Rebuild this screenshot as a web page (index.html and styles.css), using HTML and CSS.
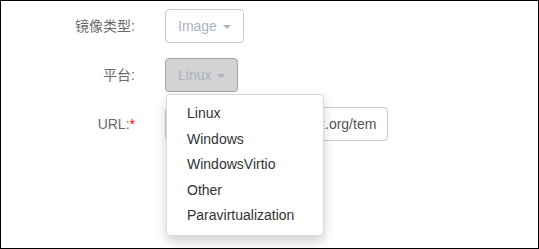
FILE: index.html
```html
<!DOCTYPE html>
<html lang="zh">
<head>
    <meta charset="UTF-8">
    <title>镜像</title>
    <link rel="stylesheet" href="styles.css">
</head>
<body>
    <form class="form-horizontal">
        <div class="form-group">
            <label class="control-label">镜像类型:</label>
            <div class="controls">
                <button type="button" class="btn btn-light">Image <span class="caret"></span></button>
            </div>
        </div>

        <div class="form-group">
            <label class="control-label">平台:</label>
            <div class="controls dropdown">
                <button type="button" class="btn btn-active">Linux <span class="caret"></span></button>
                <ul class="dropdown-menu">
                    <li><a href="#">Linux</a></li>
                    <li><a href="#">Windows</a></li>
                    <li><a href="#">WindowsVirtio</a></li>
                    <li><a href="#">Other</a></li>
                    <li><a href="#">Paravirtualization</a></li>
                </ul>
            </div>
        </div>

        <div class="form-group">
            <label class="control-label">URL:<span class="required">*</span></label>
            <div class="controls">
                <input type="text" class="form-control" value="http://download.openvz.org/tem">
            </div>
        </div>
    </form>
</body>
</html>
```

FILE: styles.css
```css
html, body {
    margin: 0;
    padding: 0;
}
body {
    width: 539px;
    height: 249px;
    box-sizing: border-box;
    border: 1px solid #000;
    background: #fff;
    font-family: "Liberation Sans", Arial, "Noto Sans CJK SC", sans-serif;
    font-size: 14px;
    line-height: 20px;
    color: #333;
    overflow: hidden;
}
.form-horizontal {
    padding-top: 8px;
}
.form-group {
    display: flex;
    margin-bottom: 15px;
}
.control-label {
    width: 134px;
    padding-right: 15px;
    padding-top: 7px;
    text-align: right;
    color: #6a6a6a;
}
.required {
    color: #f00;
}
.controls {
    padding-left: 15px;
    position: relative;
}
.btn {
    height: 34px;
    padding: 6px 12px;
    border: 1px solid #c4cad3;
    border-radius: 4px;
    background: #fff;
    font-family: inherit;
    font-size: 14px;
    line-height: 20px;
    color: #abb2bc;
    box-sizing: border-box;
}
.btn-active {
    background: #d3d3d3;
    border-color: #a4a4a4;
    color: #abb1ba;
}
.caret {
    display: inline-block;
    width: 0;
    height: 0;
    margin-left: 2px;
    vertical-align: middle;
    border-top: 4px solid;
    border-left: 4px solid transparent;
    border-right: 4px solid transparent;
}
.form-control {
    width: 223px;
    height: 34px;
    padding: 6px 9px 6px 15px;
    border: 1px solid #c4cad3;
    border-radius: 4px;
    font-family: inherit;
    font-size: 14px;
    color: #555;
    box-sizing: border-box;
}
.dropdown-menu {
    position: absolute;
    top: 36px;
    left: 16px;
    z-index: 10;
    width: 158px;
    box-sizing: border-box;
    margin: 0;
    padding: 6px 0;
    list-style: none;
    background: #fff;
    border: 1px solid rgba(0,0,0,0.15);
    border-radius: 4px;
    box-shadow: 0 6px 12px rgba(0,0,0,0.175);
}
.dropdown-menu a {
    display: block;
    padding: 3px 20px;
    line-height: 19.5px;
    color: #333;
    text-decoration: none;
    white-space: nowrap;
}
```
